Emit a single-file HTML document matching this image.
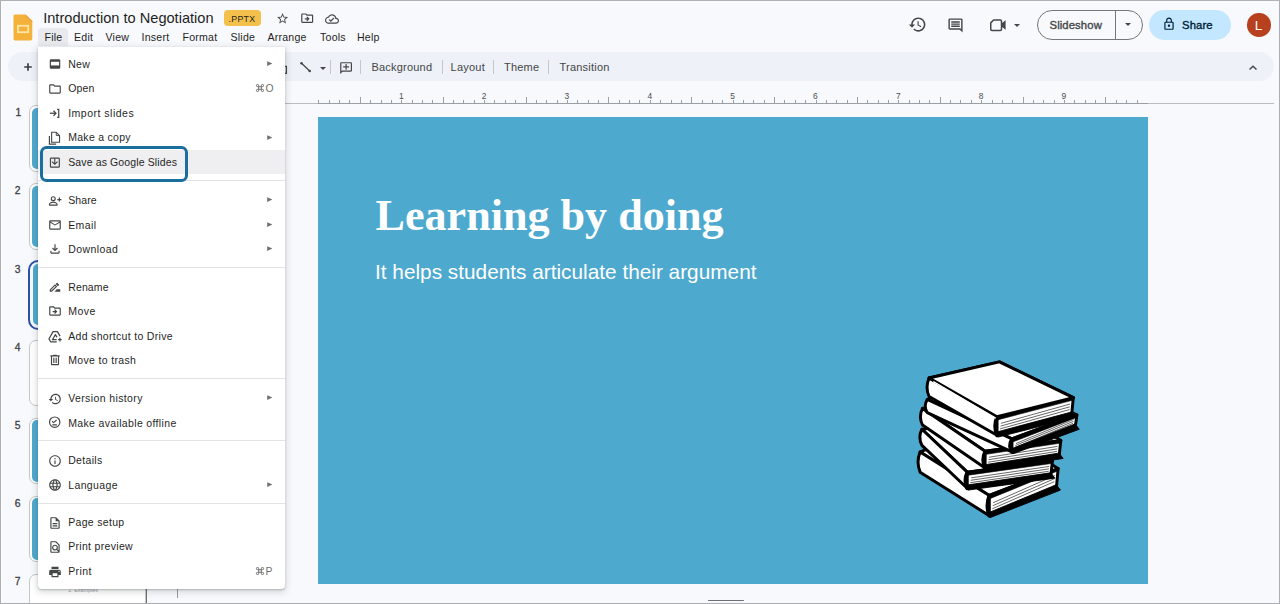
<!DOCTYPE html><html><head><meta charset="utf-8"><style>*{box-sizing:border-box;margin:0;padding:0}
html,body{width:1280px;height:604px;overflow:hidden;background:#f8f9fd;font-family:"Liberation Sans",sans-serif;color:#1f1f1f;position:relative}
.a{position:absolute;white-space:nowrap}
.t{position:absolute;white-space:nowrap;line-height:1}
svg{position:absolute;overflow:visible}
#frame{position:absolute;left:0;top:0;width:1280px;height:604px;border-top:1.5px solid #b2b3b8;border-left:1px solid #adaeb3;border-right:1.5px solid #adaeb3;border-bottom:1.5px solid #adaeb3;pointer-events:none;z-index:50}
.sep{position:absolute;width:1px;background:#c7c7c7;top:60px;height:14px}
</style></head><body>
<div class="a" id="leftwhite" style="left:1px;top:0;width:1px;height:604px;background:#ffffff"></div>
<div class="a" id="topwhite" style="left:0;top:1.5px;width:1280px;height:1.2px;background:#ffffff"></div>
<svg style="left:12.5px;top:13.5px" width="20" height="27" viewBox="0 0 20 27">
<path d="M1.8 0.5 H12.6 L19.3 7 V24.8 Q19.3 26.4 17.7 26.4 H2.1 Q0.5 26.4 0.5 24.8 V2.1 Q0.5 0.5 1.8 0.5Z" fill="#f4b13c"/>
<path d="M12.6 0.5 L19.3 7 V8.5 L12.6 2Z" fill="#e59f2e" opacity=".8"/>
<rect x="4.9" y="11.8" width="10.3" height="6.4" fill="none" stroke="#fde6a0" stroke-width="1.8"/>
</svg>
<div class="t " style="left:43.20px;top:10.64px;font-size:14.6px;color:#1f1f1f;">Introduction to Negotiation</div>
<div class="a" style="left:224px;top:10px;width:37px;height:15.5px;background:#f3c14b;border-radius:4px"></div>
<div class="t " style="left:228.40px;top:14.65px;font-size:8.8px;color:#1f1f1f;letter-spacing:0.35px">.PPTX</div>
<svg style="left:275.70px;top:11.70px" width="13.2" height="13.2" viewBox="0 0 24 24"><path fill="#444746" d="M22 9.24l-7.19-.62L12 2 9.19 8.63 2 9.24l5.46 4.73L5.82 21 12 17.27 18.18 21l-1.63-7.03L22 9.24zM12 15.4l-3.76 2.27 1-4.28-3.32-2.88 4.38-.38L12 6.1l1.71 4.04 4.38.38-3.32 2.88 1 4.28L12 15.4z"/></svg>
<svg style="left:299.70px;top:11.40px" width="14.4" height="14.4" viewBox="0 0 24 24"><path fill="#444746" d="M20 6h-8l-2-2H4c-1.1 0-1.99.9-1.99 2L2 18c0 1.1.9 2 2 2h16c1.1 0 2-.9 2-2V8c0-1.1-.9-2-2-2zm0 12H4V6h5.17l2 2H20v10zm-7.84-6H8v2h4.16l-1.59 1.59L11.99 17 16 13.01 11.99 9l-1.41 1.41L12.16 12z"/></svg>
<svg style="left:324.50px;top:11.60px" width="14.0" height="14.0" viewBox="0 0 24 24"><path fill="#444746" d="M19.35 10.04C18.67 6.59 15.64 4 12 4 9.11 4 6.6 5.64 5.35 8.04 2.34 8.36 0 10.91 0 14c0 3.31 2.69 6 6 6h13c2.76 0 5-2.24 5-5 0-2.64-2.05-4.78-4.65-4.96zM19 18H6c-2.21 0-4-1.79-4-4 0-2.05 1.53-3.760 3.56-3.97l1.07-.11.5-.95C8.08 7.14 9.94 6 12 6c2.62 0 4.88 1.86 5.39 4.43l.3 1.5 1.53.11c1.56.1 2.78 1.41 2.780 2.96 0 1.65-1.35 3-3 3zm-9-3.82l-2.09-2.09L6.5 13.5 10 17l6.01-6.01-1.41-1.41z"/></svg>
<div class="a" style="left:38px;top:28px;width:29.7px;height:18px;background:#e8eaee;border-radius:4px 4px 0 0"></div>
<div class="t " style="left:44.50px;top:31.53px;font-size:10.6px;color:#1f1f1f;letter-spacing:0.22px">File</div>
<div class="t " style="left:74.00px;top:31.53px;font-size:10.6px;color:#1f1f1f;letter-spacing:0.22px">Edit</div>
<div class="t " style="left:105.50px;top:31.53px;font-size:10.6px;color:#1f1f1f;letter-spacing:0.22px">View</div>
<div class="t " style="left:141.50px;top:31.53px;font-size:10.6px;color:#1f1f1f;letter-spacing:0.22px">Insert</div>
<div class="t " style="left:182.50px;top:31.53px;font-size:10.6px;color:#1f1f1f;letter-spacing:0.22px">Format</div>
<div class="t " style="left:230.50px;top:31.53px;font-size:10.6px;color:#1f1f1f;letter-spacing:0.22px">Slide</div>
<div class="t " style="left:267.40px;top:31.53px;font-size:10.6px;color:#1f1f1f;letter-spacing:0.22px">Arrange</div>
<div class="t " style="left:320.00px;top:31.53px;font-size:10.6px;color:#1f1f1f;letter-spacing:0.22px">Tools</div>
<div class="t " style="left:357.00px;top:31.53px;font-size:10.6px;color:#1f1f1f;letter-spacing:0.22px">Help</div>
<svg style="left:908.20px;top:15.20px" width="19" height="19" viewBox="0 0 24 24"><path fill="#444746" d="M13 3c-4.97 0-9 4.03-9 9H1l3.89 3.89.07.14L9 12H6c0-3.87 3.13-7 7-7s7 3.13 7 7-3.13 7-7 7c-1.93 0-3.68-.79-4.94-2.06l-1.42 1.42C8.27 19.990 10.51 21 13 21c4.97 0 9-4.03 9-9s-4.03-9-9-9zm-1 5v5l4.28 2.54.72-1.21-3.5-2.08V8H12z"/></svg>
<svg style="left:947.20px;top:16.90px" width="17" height="17" viewBox="0 0 24 24"><path fill="#444746" d="M21.99 4c0-1.1-.89-2-1.99-2H4c-1.1 0-2 .9-2 2v12c0 1.1.9 2 2 2h14l4 4-.01-18zM20 4v13.17L18.83 16H4V4h16zM6 12h12v2H6zm0-3h12v2H6zm0-3h12v2H6z"/></svg>
<svg style="left:989px;top:18px" width="18" height="14" viewBox="0 0 18 14">
<path d="M4.6 2 H11.3 Q12.5 2 12.5 3.2 V11.3 Q12.5 12.5 11.3 12.5 H2.9 Q1.75 12.5 1.75 11.3 V4.9Z" fill="none" stroke="#444746" stroke-width="1.5" stroke-linejoin="round"/>
<path d="M12.8 5.2 L16.6 2.2 V11.8 L12.8 8.8Z" fill="#444746"/>
</svg>
<div class="a" style="left:1013.5px;top:23.5px;width:0;height:0;border-left:3px solid transparent;border-right:3px solid transparent;border-top:3px solid #444746"></div>
<div class="a" style="left:1037px;top:9.5px;width:105.5px;height:30.5px;border:1px solid #747775;border-radius:16px"></div>
<div class="a" style="left:1115px;top:10px;width:1px;height:29.5px;background:#747775"></div>
<div class="t " style="left:1049.50px;top:19.93px;font-size:11.3px;color:#444746;-webkit-text-stroke:0.35px #444746;letter-spacing:0.1px">Slideshow</div>
<div class="a" style="left:1124.5px;top:23px;width:0;height:0;border-left:3.5px solid transparent;border-right:3.5px solid transparent;border-top:3.5px solid #444746"></div>
<div class="a" style="left:1149px;top:9.8px;width:82px;height:30.2px;background:#c2e7ff;border-radius:16px"></div>
<svg style="left:1161.60px;top:17.10px" width="14" height="14" viewBox="0 0 24 24"><path fill="#001d35" d="M18 8h-1V6c0-2.76-2.24-5-5-5S7 3.24 7 6v2H6c-1.1 0-2 .9-2 2v10c0 1.1.9 2 2 2h12c1.1 0 2-.9 2-2V10c0-1.1-.9-2-2-2zM9 6c0-1.66 1.34-3 3-3s3 1.34 3 3v2H9V6zm9 14H6V10h12v10zm-6-3c1.1 0 2-.9 2-2s-.9-2-2-2-2 .9-2 2 .9 2 2 2z"/></svg>
<div class="t " style="left:1182.00px;top:19.93px;font-size:11.3px;color:#001d35;-webkit-text-stroke:0.35px #001d35;letter-spacing:0.1px">Share</div>
<div class="a" style="left:1247px;top:13px;width:23.6px;height:23.6px;background:#b7411e;border-radius:50%"></div>
<div class="t " style="left:1254.80px;top:18.79px;font-size:13.6px;color:#ffffff;">L</div>
<div class="a" style="left:8.2px;top:51.8px;width:1265.8px;height:28.9px;background:#eef1f8;border-radius:14.5px"></div>
<div class="t " style="left:371.40px;top:62.09px;font-size:11.0px;color:#444746;letter-spacing:0.22px">Background</div>
<div class="t " style="left:450.60px;top:62.09px;font-size:11.0px;color:#444746;letter-spacing:0.22px">Layout</div>
<div class="t " style="left:504.00px;top:62.09px;font-size:11.0px;color:#444746;letter-spacing:0.22px">Theme</div>
<div class="t " style="left:559.50px;top:62.09px;font-size:11.0px;color:#444746;letter-spacing:0.22px">Transition</div>
<div class="sep" style="left:329.9px"></div>
<div class="sep" style="left:360.0px"></div>
<div class="sep" style="left:441.9px"></div>
<div class="sep" style="left:493.1px"></div>
<div class="sep" style="left:548.1px"></div>
<svg style="left:23.8px;top:62.9px" width="8" height="8" viewBox="0 0 8 8"><path d="M4 0.2 V7.8 M0.2 4 H7.8" stroke="#3c4043" stroke-width="1.7"/></svg>
<svg style="left:299px;top:61px" width="14" height="13" viewBox="0 0 14 13"><line x1="2.5" y1="2.2" x2="10.7" y2="10" stroke="#444746" stroke-width="1.3" stroke-linecap="round"/><circle cx="2.5" cy="2.2" r="1.25" fill="#444746"/><circle cx="10.7" cy="10" r="1.25" fill="#444746"/></svg>
<svg style="left:283px;top:65px" width="6" height="10" viewBox="0 0 6 10"><path d="M1.5 1.4 H3.4 V8.4 H1.5" fill="none" stroke="#444746" stroke-width="1.3"/></svg>
<div class="a" style="left:320px;top:66.5px;width:0;height:0;border-left:3px solid transparent;border-right:3px solid transparent;border-top:3px solid #444746"></div>
<svg style="left:338.70px;top:60.50px;transform:scaleX(-1)" width="14.2" height="14.2" viewBox="0 0 24 24"><path fill="#444746" d="M22 4c0-1.1-.9-2-2-2H4c-1.1 0-1.99.9-1.99 2L2 16c0 1.1.9 2 2 2h14l4 4V4zm-2 13.17L18.83 16H4V4h16v13.17zM13 5h-2v4H7v2h4v4h2v-4h4V9h-4z"/></svg>
<svg style="left:1246px;top:63px" width="12" height="8" viewBox="0 0 12 8"><path d="M3.5 6.6 L7 3.2 L10.5 6.6" fill="none" stroke="#444746" stroke-width="1.4"/></svg>
<div class="a" style="left:146px;top:103px;width:1128px;height:1px;background:#b9bcc1"></div>
<svg style="left:0;top:0" width="1280" height="110" viewBox="0 0 1280 110"><line x1="318" y1="103.5" x2="1148" y2="103.5" stroke="#9aa0a6" stroke-width="1"/><line x1="318.5" y1="100.0" x2="318.5" y2="103.5" stroke="#9aa0a6" stroke-width="1"/><line x1="329.5" y1="100.0" x2="329.5" y2="103.5" stroke="#9aa0a6" stroke-width="1"/><line x1="339.5" y1="100.0" x2="339.5" y2="103.5" stroke="#9aa0a6" stroke-width="1"/><line x1="349.5" y1="100.0" x2="349.5" y2="103.5" stroke="#9aa0a6" stroke-width="1"/><line x1="360.5" y1="97.0" x2="360.5" y2="103.5" stroke="#9aa0a6" stroke-width="1"/><line x1="370.5" y1="100.0" x2="370.5" y2="103.5" stroke="#9aa0a6" stroke-width="1"/><line x1="381.5" y1="100.0" x2="381.5" y2="103.5" stroke="#9aa0a6" stroke-width="1"/><line x1="391.5" y1="100.0" x2="391.5" y2="103.5" stroke="#9aa0a6" stroke-width="1"/><line x1="401.5" y1="100.0" x2="401.5" y2="103.5" stroke="#9aa0a6" stroke-width="1"/><line x1="412.5" y1="100.0" x2="412.5" y2="103.5" stroke="#9aa0a6" stroke-width="1"/><line x1="422.5" y1="100.0" x2="422.5" y2="103.5" stroke="#9aa0a6" stroke-width="1"/><line x1="432.5" y1="100.0" x2="432.5" y2="103.5" stroke="#9aa0a6" stroke-width="1"/><line x1="443.5" y1="97.0" x2="443.5" y2="103.5" stroke="#9aa0a6" stroke-width="1"/><line x1="453.5" y1="100.0" x2="453.5" y2="103.5" stroke="#9aa0a6" stroke-width="1"/><line x1="463.5" y1="100.0" x2="463.5" y2="103.5" stroke="#9aa0a6" stroke-width="1"/><line x1="474.5" y1="100.0" x2="474.5" y2="103.5" stroke="#9aa0a6" stroke-width="1"/><line x1="484.5" y1="100.0" x2="484.5" y2="103.5" stroke="#9aa0a6" stroke-width="1"/><line x1="494.5" y1="100.0" x2="494.5" y2="103.5" stroke="#9aa0a6" stroke-width="1"/><line x1="505.5" y1="100.0" x2="505.5" y2="103.5" stroke="#9aa0a6" stroke-width="1"/><line x1="515.5" y1="100.0" x2="515.5" y2="103.5" stroke="#9aa0a6" stroke-width="1"/><line x1="526.5" y1="97.0" x2="526.5" y2="103.5" stroke="#9aa0a6" stroke-width="1"/><line x1="536.5" y1="100.0" x2="536.5" y2="103.5" stroke="#9aa0a6" stroke-width="1"/><line x1="546.5" y1="100.0" x2="546.5" y2="103.5" stroke="#9aa0a6" stroke-width="1"/><line x1="557.5" y1="100.0" x2="557.5" y2="103.5" stroke="#9aa0a6" stroke-width="1"/><line x1="567.5" y1="100.0" x2="567.5" y2="103.5" stroke="#9aa0a6" stroke-width="1"/><line x1="577.5" y1="100.0" x2="577.5" y2="103.5" stroke="#9aa0a6" stroke-width="1"/><line x1="588.5" y1="100.0" x2="588.5" y2="103.5" stroke="#9aa0a6" stroke-width="1"/><line x1="598.5" y1="100.0" x2="598.5" y2="103.5" stroke="#9aa0a6" stroke-width="1"/><line x1="608.5" y1="97.0" x2="608.5" y2="103.5" stroke="#9aa0a6" stroke-width="1"/><line x1="619.5" y1="100.0" x2="619.5" y2="103.5" stroke="#9aa0a6" stroke-width="1"/><line x1="629.5" y1="100.0" x2="629.5" y2="103.5" stroke="#9aa0a6" stroke-width="1"/><line x1="639.5" y1="100.0" x2="639.5" y2="103.5" stroke="#9aa0a6" stroke-width="1"/><line x1="650.5" y1="100.0" x2="650.5" y2="103.5" stroke="#9aa0a6" stroke-width="1"/><line x1="660.5" y1="100.0" x2="660.5" y2="103.5" stroke="#9aa0a6" stroke-width="1"/><line x1="671.5" y1="100.0" x2="671.5" y2="103.5" stroke="#9aa0a6" stroke-width="1"/><line x1="681.5" y1="100.0" x2="681.5" y2="103.5" stroke="#9aa0a6" stroke-width="1"/><line x1="691.5" y1="97.0" x2="691.5" y2="103.5" stroke="#9aa0a6" stroke-width="1"/><line x1="702.5" y1="100.0" x2="702.5" y2="103.5" stroke="#9aa0a6" stroke-width="1"/><line x1="712.5" y1="100.0" x2="712.5" y2="103.5" stroke="#9aa0a6" stroke-width="1"/><line x1="722.5" y1="100.0" x2="722.5" y2="103.5" stroke="#9aa0a6" stroke-width="1"/><line x1="733.5" y1="100.0" x2="733.5" y2="103.5" stroke="#9aa0a6" stroke-width="1"/><line x1="743.5" y1="100.0" x2="743.5" y2="103.5" stroke="#9aa0a6" stroke-width="1"/><line x1="753.5" y1="100.0" x2="753.5" y2="103.5" stroke="#9aa0a6" stroke-width="1"/><line x1="764.5" y1="100.0" x2="764.5" y2="103.5" stroke="#9aa0a6" stroke-width="1"/><line x1="774.5" y1="97.0" x2="774.5" y2="103.5" stroke="#9aa0a6" stroke-width="1"/><line x1="784.5" y1="100.0" x2="784.5" y2="103.5" stroke="#9aa0a6" stroke-width="1"/><line x1="795.5" y1="100.0" x2="795.5" y2="103.5" stroke="#9aa0a6" stroke-width="1"/><line x1="805.5" y1="100.0" x2="805.5" y2="103.5" stroke="#9aa0a6" stroke-width="1"/><line x1="816.5" y1="100.0" x2="816.5" y2="103.5" stroke="#9aa0a6" stroke-width="1"/><line x1="826.5" y1="100.0" x2="826.5" y2="103.5" stroke="#9aa0a6" stroke-width="1"/><line x1="836.5" y1="100.0" x2="836.5" y2="103.5" stroke="#9aa0a6" stroke-width="1"/><line x1="847.5" y1="100.0" x2="847.5" y2="103.5" stroke="#9aa0a6" stroke-width="1"/><line x1="857.5" y1="97.0" x2="857.5" y2="103.5" stroke="#9aa0a6" stroke-width="1"/><line x1="867.5" y1="100.0" x2="867.5" y2="103.5" stroke="#9aa0a6" stroke-width="1"/><line x1="878.5" y1="100.0" x2="878.5" y2="103.5" stroke="#9aa0a6" stroke-width="1"/><line x1="888.5" y1="100.0" x2="888.5" y2="103.5" stroke="#9aa0a6" stroke-width="1"/><line x1="898.5" y1="100.0" x2="898.5" y2="103.5" stroke="#9aa0a6" stroke-width="1"/><line x1="909.5" y1="100.0" x2="909.5" y2="103.5" stroke="#9aa0a6" stroke-width="1"/><line x1="919.5" y1="100.0" x2="919.5" y2="103.5" stroke="#9aa0a6" stroke-width="1"/><line x1="929.5" y1="100.0" x2="929.5" y2="103.5" stroke="#9aa0a6" stroke-width="1"/><line x1="940.5" y1="97.0" x2="940.5" y2="103.5" stroke="#9aa0a6" stroke-width="1"/><line x1="950.5" y1="100.0" x2="950.5" y2="103.5" stroke="#9aa0a6" stroke-width="1"/><line x1="960.5" y1="100.0" x2="960.5" y2="103.5" stroke="#9aa0a6" stroke-width="1"/><line x1="971.5" y1="100.0" x2="971.5" y2="103.5" stroke="#9aa0a6" stroke-width="1"/><line x1="981.5" y1="100.0" x2="981.5" y2="103.5" stroke="#9aa0a6" stroke-width="1"/><line x1="992.5" y1="100.0" x2="992.5" y2="103.5" stroke="#9aa0a6" stroke-width="1"/><line x1="1002.5" y1="100.0" x2="1002.5" y2="103.5" stroke="#9aa0a6" stroke-width="1"/><line x1="1012.5" y1="100.0" x2="1012.5" y2="103.5" stroke="#9aa0a6" stroke-width="1"/><line x1="1023.5" y1="97.0" x2="1023.5" y2="103.5" stroke="#9aa0a6" stroke-width="1"/><line x1="1033.5" y1="100.0" x2="1033.5" y2="103.5" stroke="#9aa0a6" stroke-width="1"/><line x1="1043.5" y1="100.0" x2="1043.5" y2="103.5" stroke="#9aa0a6" stroke-width="1"/><line x1="1054.5" y1="100.0" x2="1054.5" y2="103.5" stroke="#9aa0a6" stroke-width="1"/><line x1="1064.5" y1="100.0" x2="1064.5" y2="103.5" stroke="#9aa0a6" stroke-width="1"/><line x1="1074.5" y1="100.0" x2="1074.5" y2="103.5" stroke="#9aa0a6" stroke-width="1"/><line x1="1085.5" y1="100.0" x2="1085.5" y2="103.5" stroke="#9aa0a6" stroke-width="1"/><line x1="1095.5" y1="100.0" x2="1095.5" y2="103.5" stroke="#9aa0a6" stroke-width="1"/><line x1="1105.5" y1="97.0" x2="1105.5" y2="103.5" stroke="#9aa0a6" stroke-width="1"/><line x1="1116.5" y1="100.0" x2="1116.5" y2="103.5" stroke="#9aa0a6" stroke-width="1"/><line x1="1126.5" y1="100.0" x2="1126.5" y2="103.5" stroke="#9aa0a6" stroke-width="1"/><line x1="1137.5" y1="100.0" x2="1137.5" y2="103.5" stroke="#9aa0a6" stroke-width="1"/></svg>
<div class="t" style="left:398.9px;top:91.6px;font-size:8.4px;color:#4a4d50">1</div>
<div class="t" style="left:481.7px;top:91.6px;font-size:8.4px;color:#4a4d50">2</div>
<div class="t" style="left:564.5px;top:91.6px;font-size:8.4px;color:#4a4d50">3</div>
<div class="t" style="left:647.4px;top:91.6px;font-size:8.4px;color:#4a4d50">4</div>
<div class="t" style="left:730.2px;top:91.6px;font-size:8.4px;color:#4a4d50">5</div>
<div class="t" style="left:813.1px;top:91.6px;font-size:8.4px;color:#4a4d50">6</div>
<div class="t" style="left:895.9px;top:91.6px;font-size:8.4px;color:#4a4d50">7</div>
<div class="t" style="left:978.8px;top:91.6px;font-size:8.4px;color:#4a4d50">8</div>
<div class="t" style="left:1061.6px;top:91.6px;font-size:8.4px;color:#4a4d50">9</div>
<div class="a" style="left:318px;top:117.1px;width:830px;height:467.2px;background:#4ea9cf"></div>
<div class="t " style="left:375.60px;top:194.07px;font-size:44.1px;color:#ffffff;font-family:'Liberation Serif',serif;font-weight:bold">Learning by doing</div>
<div class="t " style="left:375.00px;top:262.19px;font-size:20.8px;color:#ffffff;">It helps students articulate their argument</div>
<svg style="left:910px;top:350px" width="180" height="180" viewBox="0 0 604 604"><g stroke="#000" stroke-linejoin="round" stroke-linecap="round"><path d="M34.0,342.0 L265.0,252.0 L497.0,398.0 L266.0,488.0Z" fill="#fff" stroke-width="10"/><path d="M34.0,342.0 L266.0,488.0 L266.0,556.0 L34.0,410.0 Q20.0,376.0 34.0,342.0Z" fill="#fff" stroke-width="10"/><path d="M266.0,488.0 L497.0,398.0 L491.0,466.0 L266.0,556.0Z" fill="#fff" stroke-width="10"/><path d="M266.0,545.0 L491.0,452.0 L505.0,470.0 L270.0,562.0Z" fill="#000" stroke-width="3"/><path d="M266.0,488.0 L497.0,398.0 L493.0,407.0 L270.0,498.0Z" fill="#000" stroke-width="2"/><line x1="280.5" y1="511.8" x2="484.9" y2="421.8" stroke-width="2"/><line x1="279.0" y1="522.0" x2="484.0" y2="432.0" stroke-width="2"/><line x1="277.5" y1="532.2" x2="483.1" y2="442.2" stroke-width="2"/><path d="M266.0,490.0 Q254.0,522.0 266.0,556.0" fill="none" stroke-width="13"/><path d="M40.0,266.0 L326.0,228.0 L478.0,372.0 L192.0,410.0Z" fill="#fff" stroke-width="10"/><path d="M40.0,266.0 L192.0,410.0 L192.0,464.0 L40.0,320.0 Q26.0,293.0 40.0,266.0Z" fill="#fff" stroke-width="10"/><path d="M192.0,410.0 L478.0,372.0 L472.0,426.0 L192.0,464.0Z" fill="#fff" stroke-width="10"/><path d="M192.0,453.0 L472.0,412.0 L486.0,430.0 L196.0,470.0Z" fill="#000" stroke-width="3"/><path d="M192.0,410.0 L478.0,372.0 L474.0,381.0 L196.0,420.0Z" fill="#000" stroke-width="2"/><line x1="206.5" y1="428.9" x2="465.9" y2="390.9" stroke-width="2"/><line x1="205.0" y1="437.0" x2="465.0" y2="399.0" stroke-width="2"/><line x1="203.5" y1="445.1" x2="464.1" y2="407.1" stroke-width="2"/><path d="M192.0,412.0 Q180.0,437.0 192.0,464.0" fill="none" stroke-width="13"/><path d="M42.0,196.0 L296.0,160.0 L506.0,304.0 L252.0,340.0Z" fill="#fff" stroke-width="10"/><path d="M42.0,196.0 L252.0,340.0 L252.0,396.0 L42.0,252.0 Q28.0,224.0 42.0,196.0Z" fill="#fff" stroke-width="10"/><path d="M252.0,340.0 L506.0,304.0 L500.0,360.0 L252.0,396.0Z" fill="#fff" stroke-width="10"/><path d="M252.0,385.0 L500.0,346.0 L514.0,364.0 L256.0,402.0Z" fill="#000" stroke-width="3"/><path d="M252.0,340.0 L506.0,304.0 L502.0,313.0 L256.0,350.0Z" fill="#000" stroke-width="2"/><line x1="266.5" y1="359.6" x2="493.9" y2="323.6" stroke-width="2"/><line x1="265.0" y1="368.0" x2="493.0" y2="332.0" stroke-width="2"/><line x1="263.5" y1="376.4" x2="492.1" y2="340.4" stroke-width="2"/><path d="M252.0,342.0 Q240.0,368.0 252.0,396.0" fill="none" stroke-width="13"/><path d="M58.0,166.0 L276.0,86.0 L560.0,218.0 L342.0,298.0Z" fill="#fff" stroke-width="10"/><path d="M58.0,166.0 L342.0,298.0 L342.0,342.0 L58.0,210.0 Q44.0,188.0 58.0,166.0Z" fill="#fff" stroke-width="10"/><path d="M342.0,298.0 L560.0,218.0 L554.0,262.0 L342.0,342.0Z" fill="#fff" stroke-width="10"/><path d="M342.0,331.0 L554.0,248.0 L568.0,266.0 L346.0,348.0Z" fill="#000" stroke-width="3"/><path d="M342.0,298.0 L560.0,218.0 L556.0,227.0 L346.0,308.0Z" fill="#000" stroke-width="2"/><line x1="356.5" y1="313.4" x2="547.9" y2="233.4" stroke-width="2"/><line x1="355.0" y1="320.0" x2="547.0" y2="240.0" stroke-width="2"/><line x1="353.5" y1="326.6" x2="546.1" y2="246.6" stroke-width="2"/><path d="M342.0,300.0 Q330.0,320.0 342.0,342.0" fill="none" stroke-width="13"/><path d="M64.0,94.0 L300.0,40.0 L548.0,160.0 L292.0,224.0Z" fill="#fff" stroke-width="10"/><path d="M64.0,94.0 L292.0,224.0 L292.0,286.0 L64.0,156.0 Q50.0,125.0 64.0,94.0Z" fill="#fff" stroke-width="10"/><path d="M292.0,224.0 L548.0,160.0 L542.0,222.0 L292.0,286.0Z" fill="#fff" stroke-width="10"/><path d="M292.0,275.0 L542.0,208.0 L556.0,226.0 L296.0,292.0Z" fill="#000" stroke-width="3"/><path d="M292.0,224.0 L548.0,160.0 L544.0,169.0 L296.0,234.0Z" fill="#000" stroke-width="2"/><line x1="306.5" y1="245.7" x2="535.9" y2="181.7" stroke-width="2"/><line x1="305.0" y1="255.0" x2="535.0" y2="191.0" stroke-width="2"/><line x1="303.5" y1="264.3" x2="534.1" y2="200.3" stroke-width="2"/><path d="M292.0,226.0 Q280.0,255.0 292.0,286.0" fill="none" stroke-width="13"/><path d="M64.0,94.0 L300.0,40.0 L548.0,160.0 L292.0,224.0Z" fill="#fff" stroke="none"/><path d="M292.0,224.0 L64.0,94.0 L300.0,40.0 L548.0,160.0 L292.0,224.0" fill="none" stroke-width="10"/><path d="M80.0,107.0 L286.0,228.0" fill="none" stroke="#fff" stroke-width="5"/><path d="M78.0,100.0 L290.0,224.0" fill="none" stroke-width="3"/></g></svg>
<div class="t " style="left:15.60px;top:108.28px;font-size:10.3px;color:#3c4043;-webkit-text-stroke:0.3px #3c4043">1</div>
<div class="a" style="left:29.3px;top:105.0px;width:117px;height:66.5px;border:1px solid #c4c7c5;border-radius:7px;background:#fff"></div>
<div class="a" style="left:32px;top:107.5px;width:111px;height:61.5px;background:#4ea9cf;border-radius:5px"></div>
<div class="t " style="left:14.80px;top:186.45px;font-size:10.3px;color:#3c4043;-webkit-text-stroke:0.3px #3c4043">2</div>
<div class="a" style="left:29.3px;top:183.2px;width:117px;height:66.5px;border:1px solid #c4c7c5;border-radius:7px;background:#fff"></div>
<div class="a" style="left:32px;top:185.7px;width:111px;height:61.5px;background:#4ea9cf;border-radius:5px"></div>
<div class="t " style="left:14.80px;top:264.62px;font-size:10.3px;color:#3c4043;-webkit-text-stroke:0.3px #3c4043">3</div>
<div class="a" style="left:28px;top:260.0px;width:122px;height:70.2px;border:2.6px solid #2a53a8;border-radius:10px"></div>
<div class="a" style="left:32.6px;top:263.9px;width:111px;height:61.6px;background:#4ea9cf;border-radius:5px"></div>
<div class="t " style="left:14.80px;top:342.79px;font-size:10.3px;color:#3c4043;-webkit-text-stroke:0.3px #3c4043">4</div>
<div class="a" style="left:29.3px;top:339.5px;width:117px;height:66.5px;border:1px solid #c4c7c5;border-radius:7px;background:#fff"></div>
<div class="t " style="left:14.80px;top:420.96px;font-size:10.3px;color:#3c4043;-webkit-text-stroke:0.3px #3c4043">5</div>
<div class="a" style="left:29.3px;top:417.7px;width:117px;height:66.5px;border:1px solid #c4c7c5;border-radius:7px;background:#fff"></div>
<div class="a" style="left:32px;top:420.2px;width:111px;height:61.5px;background:#4ea9cf;border-radius:5px"></div>
<div class="t " style="left:14.80px;top:499.13px;font-size:10.3px;color:#3c4043;-webkit-text-stroke:0.3px #3c4043">6</div>
<div class="a" style="left:29.3px;top:495.9px;width:117px;height:66.5px;border:1px solid #c4c7c5;border-radius:7px;background:#fff"></div>
<div class="a" style="left:32px;top:498.4px;width:111px;height:61.5px;background:#4ea9cf;border-radius:5px"></div>
<div class="t " style="left:14.80px;top:577.30px;font-size:10.3px;color:#3c4043;-webkit-text-stroke:0.3px #3c4043">7</div>
<div class="a" style="left:29.3px;top:574.0px;width:117px;height:66.5px;border:1px solid #c4c7c5;border-radius:7px;background:#fff"></div>
<div class="a" style="left:146px;top:589px;width:1px;height:14px;background:#6f6f6f"></div>
<div class="a" style="left:177px;top:589px;width:1px;height:9px;background:#9a9a9a"></div>
<div class="t " style="left:68.20px;top:587.93px;font-size:5.4px;color:#9aa0a6;">2. Examples</div>
<div class="a" style="left:707.6px;top:599.6px;width:36.6px;height:1.7px;background:#6d7175;border-radius:1px"></div>
<div class="a" style="left:37.7px;top:46.5px;width:247.7px;height:542.5px;background:#fff;border-radius:0 0 4px 4px;box-shadow:0 1px 2px rgba(60,64,67,.3),0 2px 6px 2px rgba(60,64,67,.15);z-index:5"></div>
<div id="menu" style="position:absolute;left:0;top:0;z-index:6">
<div class="a" style="left:38px;top:149.9px;width:246.5px;height:24px;background:#efeff1"></div>
<div class="a" style="left:38px;top:180.3px;width:247px;height:1px;background:#e3e3e3"></div>
<div class="a" style="left:38px;top:266.9px;width:247px;height:1px;background:#e3e3e3"></div>
<div class="a" style="left:38px;top:378.4px;width:247px;height:1px;background:#e3e3e3"></div>
<div class="a" style="left:38px;top:440.0px;width:247px;height:1px;background:#e3e3e3"></div>
<div class="a" style="left:38px;top:502.7px;width:247px;height:1px;background:#e3e3e3"></div>
<svg style="left:48.20px;top:57.20px" width="14" height="14" viewBox="0 0 24 24"><rect x="3" y="4" width="18" height="16" rx="2.2" fill="#444746"/><rect x="5" y="8.2" width="14" height="6.3" fill="#fff"/></svg>
<div class="t " style="left:68.20px;top:58.96px;font-size:10.5px;color:#1f1f1f;letter-spacing:0.300px">New</div>
<svg style="left:267px;top:61.10px" width="6" height="6" viewBox="0 0 6 6"><path d="M0.2 0.2 L5.4 2.6 L0.2 5Z" fill="#707070"/></svg>
<svg style="left:48.20px;top:81.70px" width="14" height="14" viewBox="0 0 24 24"><path fill="#444746" d="M9.17 6l2 2H20v10H4V6h5.17M10 4H4c-1.1 0-1.99.9-1.99 2L2 18c0 1.1.9 2 2 2h16c1.1 0 2-.9 2-2V8c0-1.1-.9-2-2-2h-8l-2-2z"/></svg>
<div class="t " style="left:68.20px;top:83.46px;font-size:10.5px;color:#1f1f1f;letter-spacing:0.133px">Open</div>
<svg style="left:256px;top:84.40px" width="8" height="8" viewBox="0 0 8 8"><path d="M2.7 2.7 H5.3 V5.3 H2.7Z M2.7 2.7 V1.7 A1.15 1.15 0 1 0 1.7 2.7 H2.7 M5.3 2.7 V1.7 A1.15 1.15 0 1 1 6.3 2.7 H5.3 M5.3 5.3 V6.3 A1.15 1.15 0 1 0 6.3 5.3 H5.3 M2.7 5.3 V6.3 A1.15 1.15 0 1 1 1.7 5.3 H2.7" fill="none" stroke="#707070" stroke-width="1"/></svg>
<div class="t " style="left:265.40px;top:84.10px;font-size:10.4px;color:#707070;">O</div>
<svg style="left:48.20px;top:106.20px" width="14" height="14" viewBox="0 0 24 24"><path d="M3.2 12.4 H13.6" stroke="#444746" stroke-width="2.2" fill="none"/><path d="M9.4 8.2 L13.6 12.4 L9.4 16.6" stroke="#444746" stroke-width="2.2" fill="none"/><path d="M15.6 5.6 H18.4 V19.6 H15.6" stroke="#444746" stroke-width="2.1" fill="none"/></svg>
<div class="t " style="left:68.20px;top:107.96px;font-size:10.5px;color:#1f1f1f;letter-spacing:0.500px">Import slides</div>
<svg style="left:48.20px;top:130.70px" width="14" height="14" viewBox="0 0 24 24"><path d="M6.2 2.2 H14.2 L19.8 7.8 V19.3 H6.2Z" stroke="#444746" stroke-width="1.9" fill="none" stroke-linejoin="round"/><path d="M14.2 2.2 V7.8 H19.8" stroke="#444746" stroke-width="1.6" fill="none"/><path d="M2.4 8.5 V22.5 H14" stroke="#444746" stroke-width="2" fill="none"/></svg>
<div class="t " style="left:68.20px;top:132.46px;font-size:10.5px;color:#1f1f1f;letter-spacing:0.290px">Make a copy</div>
<svg style="left:267px;top:134.60px" width="6" height="6" viewBox="0 0 6 6"><path d="M0.2 0.2 L5.4 2.6 L0.2 5Z" fill="#707070"/></svg>
<svg style="left:48.20px;top:155.60px" width="14" height="14" viewBox="0 0 24 24"><rect x="4.2" y="3.6" width="15.2" height="15.4" rx="1.2" stroke="#444746" stroke-width="2" fill="none"/><path d="M11.6 4 V14.2" stroke="#444746" stroke-width="2"/><path d="M6.9 9.5 L11.6 14.2 L16.3 9.5" stroke="#444746" stroke-width="2" fill="none"/></svg>
<div class="t " style="left:68.20px;top:157.36px;font-size:10.5px;color:#1f1f1f;letter-spacing:0.125px">Save as Google Slides</div>
<svg style="left:48.20px;top:193.50px" width="14" height="14" viewBox="0 0 24 24"><circle cx="9" cy="8" r="3.3" stroke="#444746" stroke-width="2" fill="none"/><path d="M2.5 19 V17.8 C2.5 15.5 6.5 14 9 14 S15.5 15.5 15.5 17.8 V19Z" stroke="#444746" stroke-width="2" fill="none" stroke-linejoin="round"/><path d="M19.5 6 V13 M16 9.5 H23" stroke="#444746" stroke-width="2"/></svg>
<div class="t " style="left:68.20px;top:195.26px;font-size:10.5px;color:#1f1f1f;letter-spacing:0.100px">Share</div>
<svg style="left:267px;top:197.40px" width="6" height="6" viewBox="0 0 6 6"><path d="M0.2 0.2 L5.4 2.6 L0.2 5Z" fill="#707070"/></svg>
<svg style="left:48.20px;top:217.90px" width="14" height="14" viewBox="0 0 24 24"><path fill="#444746" d="M20 4H4c-1.1 0-1.99.9-1.99 2L2 18c0 1.1.9 2 2 2h16c1.1 0 2-.9 2-2V6c0-1.1-.9-2-2-2zm0 14H4V8l8 5 8-5v10zm-8-7L4 6h16l-8 5z"/></svg>
<div class="t " style="left:68.20px;top:219.66px;font-size:10.5px;color:#1f1f1f;letter-spacing:0.400px">Email</div>
<svg style="left:267px;top:221.80px" width="6" height="6" viewBox="0 0 6 6"><path d="M0.2 0.2 L5.4 2.6 L0.2 5Z" fill="#707070"/></svg>
<svg style="left:48.20px;top:242.20px" width="14" height="14" viewBox="0 0 24 24"><path fill="#444746" d="M18 15v3H6v-3H4v3c0 1.1.9 2 2 2h12c1.1 0 2-.9 2-2v-3h-2zm-1-4l-1.41-1.41L13 12.17V4h-2v8.17L8.41 9.59 7 11l5 5 5-5z"/></svg>
<div class="t " style="left:68.20px;top:243.96px;font-size:10.5px;color:#1f1f1f;letter-spacing:0.437px">Download</div>
<svg style="left:267px;top:246.10px" width="6" height="6" viewBox="0 0 6 6"><path d="M0.2 0.2 L5.4 2.6 L0.2 5Z" fill="#707070"/></svg>
<svg style="left:48.20px;top:279.90px" width="14" height="14" viewBox="0 0 24 24"><path fill="#444746" d="M15 16l-4 4h10v-4zm-2.94-8.81L3 16.250V20h3.75l9.06-9.06-3.75-3.75zM5.92 18H5v-.92l7.06-7.06.92.92L5.92 18zm12.79-9.04c.39-.39.39-1.02 0-1.41l-2.34-2.34c-.2-.2-.45-.29-.71-.29s-.51.1-.7.29l-1.83 1.83 3.75 3.75 1.83-1.83z"/></svg>
<div class="t " style="left:68.20px;top:281.66px;font-size:10.5px;color:#1f1f1f;letter-spacing:0.140px">Rename</div>
<svg style="left:48.20px;top:304.40px" width="14" height="14" viewBox="0 0 24 24"><path fill="#444746" d="M20 6h-8l-2-2H4c-1.1 0-1.99.9-1.99 2L2 18c0 1.1.9 2 2 2h16c1.1 0 2-.9 2-2V8c0-1.1-.9-2-2-2zm0 12H4V6h5.17l2 2H20v10zm-7.84-6H8v2h4.16l-1.59 1.59L11.99 17 16 13.01 11.99 9l-1.41 1.41L12.16 12z"/></svg>
<div class="t " style="left:68.20px;top:306.16px;font-size:10.5px;color:#1f1f1f;letter-spacing:0.500px">Move</div>
<svg style="left:48.20px;top:328.90px" width="14" height="14" viewBox="0 0 24 24"><path d="M20.6 12.2 L16.1 4.45 H8.7 L1.6 17.2 L4.8 22.1 H14.9" stroke="#444746" stroke-width="2.1" fill="none" stroke-linejoin="round"/><path d="M14.9 18.3 H7.5 L12.7 9.6 L15.5 14.4" stroke="#444746" stroke-width="2" fill="none" stroke-linejoin="round"/><path d="M20.4 15.2 V21.4 M17.3 18.3 H23.5" stroke="#444746" stroke-width="2"/></svg>
<div class="t " style="left:68.20px;top:330.66px;font-size:10.5px;color:#1f1f1f;letter-spacing:0.320px">Add shortcut to Drive</div>
<svg style="left:48.20px;top:353.40px" width="14" height="14" viewBox="0 0 24 24"><path fill="#444746" d="M7 21q-.825 0-1.413-.588Q5 19.825 5 19V6H4V4h5V3h6v1h5v2h-1v13q0 .825-.587 1.413Q17.825 21 17 21ZM17 6H7v13h10ZM9 17h2V8H9Zm4 0h2V8h-2Z"/></svg>
<div class="t " style="left:68.20px;top:355.16px;font-size:10.5px;color:#1f1f1f;letter-spacing:0.347px">Move to trash</div>
<svg style="left:48.20px;top:391.50px" width="14" height="14" viewBox="0 0 24 24"><path fill="#444746" d="M13 3c-4.97 0-9 4.03-9 9H1l3.89 3.89.07.14L9 12H6c0-3.87 3.13-7 7-7s7 3.13 7 7-3.13 7-7 7c-1.93 0-3.68-.79-4.94-2.06l-1.42 1.42C8.27 19.990 10.51 21 13 21c4.97 0 9-4.03 9-9s-4.03-9-9-9zm-1 5v5l4.28 2.54.72-1.21-3.5-2.08V8H12z"/></svg>
<div class="t " style="left:68.20px;top:393.26px;font-size:10.5px;color:#1f1f1f;letter-spacing:0.384px">Version history</div>
<svg style="left:267px;top:395.40px" width="6" height="6" viewBox="0 0 6 6"><path d="M0.2 0.2 L5.4 2.6 L0.2 5Z" fill="#707070"/></svg>
<svg style="left:48.20px;top:415.90px" width="14" height="14" viewBox="0 0 24 24"><circle cx="11.5" cy="10.6" r="8.9" stroke="#444746" stroke-width="2" fill="none"/><path d="M6.9 8.9 L9.8 11.3 L14.7 6.9" stroke="#444746" stroke-width="2" fill="none"/><path d="M7.5 15.2 H15.2" stroke="#444746" stroke-width="2.2"/></svg>
<div class="t " style="left:68.20px;top:417.66px;font-size:10.5px;color:#1f1f1f;letter-spacing:0.347px">Make available offline</div>
<svg style="left:48.20px;top:453.50px" width="14" height="14" viewBox="0 0 24 24"><path fill="#444746" d="M11 7h2v2h-2zm0 4h2v6h-2zm1-9C6.48 2 2 6.48 2 12s4.48 10 10 10 10-4.48 10-10S17.52 2 12 2zm0 18c-4.41 0-8-3.59-8-8s3.59-8 8-8 8 3.59 8 8-3.59 8-8 8z"/></svg>
<div class="t " style="left:68.20px;top:455.26px;font-size:10.5px;color:#1f1f1f;letter-spacing:0.333px">Details</div>
<svg style="left:48.20px;top:477.90px" width="14" height="14" viewBox="0 0 24 24"><path fill="#444746" d="M11.99 2C6.47 2 2 6.48 2 12s4.47 10 9.99 10C17.52 22 22 17.52 22 12S17.52 2 11.99 2zm6.93 6h-2.95c-.32-1.25-.78-2.45-1.38-3.56 1.84.63 3.37 1.91 4.33 3.56zM12 4.04c.83 1.2 1.48 2.53 1.91 3.96h-3.82c.43-1.43 1.08-2.76 1.91-3.96zM4.26 14C4.1 13.36 4 12.69 4 12s.1-1.36.26-2h3.38c-.08.66-.14 1.32-.14 2 0 .68.06 1.34.14 2H4.26zm.82 2h2.95c.32 1.25.78 2.45 1.38 3.56-1.84-.63-3.37-1.9-4.33-3.56zm2.95-8H5.08c.96-1.66 2.49-2.93 4.33-3.56C8.81 5.55 8.35 6.75 8.03 8zM12 19.96c-.83-1.2-1.48-2.53-1.91-3.96h3.820c-.43 1.43-1.08 2.76-1.91 3.96zM14.34 14H9.66c-.09-.66-.16-1.32-.16-2 0-.68.07-1.35.16-2h4.68c.09.65.16 1.32.16 2 0 .68-.07 1.34-.16 2zm.25 5.56c.6-1.11 1.06-2.31 1.38-3.56h2.95c-.96 1.65-2.49 2.93-4.33 3.56zM16.36 14c.08-.66.14-1.32.14-2 0-.68-.06-1.34-.14-2h3.38c.16.64.26 1.31.26 2s-.1 1.36-.26 2h-3.38z"/></svg>
<div class="t " style="left:68.20px;top:479.66px;font-size:10.5px;color:#1f1f1f;letter-spacing:0.389px">Language</div>
<svg style="left:267px;top:481.80px" width="6" height="6" viewBox="0 0 6 6"><path d="M0.2 0.2 L5.4 2.6 L0.2 5Z" fill="#707070"/></svg>
<svg style="left:48.20px;top:515.50px" width="14" height="14" viewBox="0 0 24 24"><path fill="#444746" d="M8 16h8v2H8zm0-4h8v2H8zm6-10H6c-1.1 0-2 .9-2 2v16c0 1.1.89 2 1.99 2H18c1.1 0 2-.9 2-2V8l-6-6zm4 18H6V4h7v5h5v11z"/></svg>
<div class="t " style="left:68.20px;top:517.26px;font-size:10.5px;color:#1f1f1f;letter-spacing:0.320px">Page setup</div>
<svg style="left:48.20px;top:539.70px" width="14" height="14" viewBox="0 0 24 24"><path fill="#444746" d="M14 2H6c-1.1 0-1.99.9-1.99 2L4 20c0 1.1.89 2 1.99 2H18c1.1 0 2-.9 2-2V8l-6-6zM6 4h7l5 5v8.58l-1.84-1.84c1.28-1.94 1.07-4.57-.64-6.28C14.55 8.49 13.28 8 12 8c-1.28 0-2.55.49-3.53 1.46-1.95 1.95-1.95 5.11 0 7.05.97.97 2.25 1.46 3.53 1.46.96 0 1.92-.28 2.75-.83L17.6 20H6V4zm8.11 11.1c-.56.56-1.31.88-2.11.88s-1.55-.31-2.110-.88c-.56-.56-.88-1.31-.88-2.11s.31-1.55.88-2.11c.56-.57 1.31-.88 2.11-.88s1.55.31 2.11.88c.56.56.88 1.31.88 2.11s-.31 1.55-.88 2.11z"/></svg>
<div class="t " style="left:68.20px;top:541.46px;font-size:10.5px;color:#1f1f1f;letter-spacing:0.313px">Print preview</div>
<svg style="left:48.20px;top:564.60px" width="14" height="14" viewBox="0 0 24 24"><path fill="#444746" d="M19 8H5c-1.66 0-3 1.34-3 3v6h4v4h12v-4h4v-6c0-1.66-1.34-3-3-3zm-3 11H8v-5h8v5zm3-7c-.55 0-1-.45-1-1s.45-1 1-1 1 .45 1 1-.45 1-1 1zm-1-9H6v4h12V3z"/></svg>
<div class="t " style="left:68.20px;top:566.36px;font-size:10.5px;color:#1f1f1f;letter-spacing:0.400px">Print</div>
<svg style="left:256px;top:567.30px" width="8" height="8" viewBox="0 0 8 8"><path d="M2.7 2.7 H5.3 V5.3 H2.7Z M2.7 2.7 V1.7 A1.15 1.15 0 1 0 1.7 2.7 H2.7 M5.3 2.7 V1.7 A1.15 1.15 0 1 1 6.3 2.7 H5.3 M5.3 5.3 V6.3 A1.15 1.15 0 1 0 6.3 5.3 H5.3 M2.7 5.3 V6.3 A1.15 1.15 0 1 1 1.7 5.3 H2.7" fill="none" stroke="#707070" stroke-width="1"/></svg>
<div class="t " style="left:265.40px;top:567.00px;font-size:10.4px;color:#707070;">P</div>
<div class="a" style="left:40.4px;top:145.9px;width:147.5px;height:35.9px;border:3.1px solid #1a6f9f;border-radius:6.5px"></div>
</div>
<div id="frame"></div></body></html>
